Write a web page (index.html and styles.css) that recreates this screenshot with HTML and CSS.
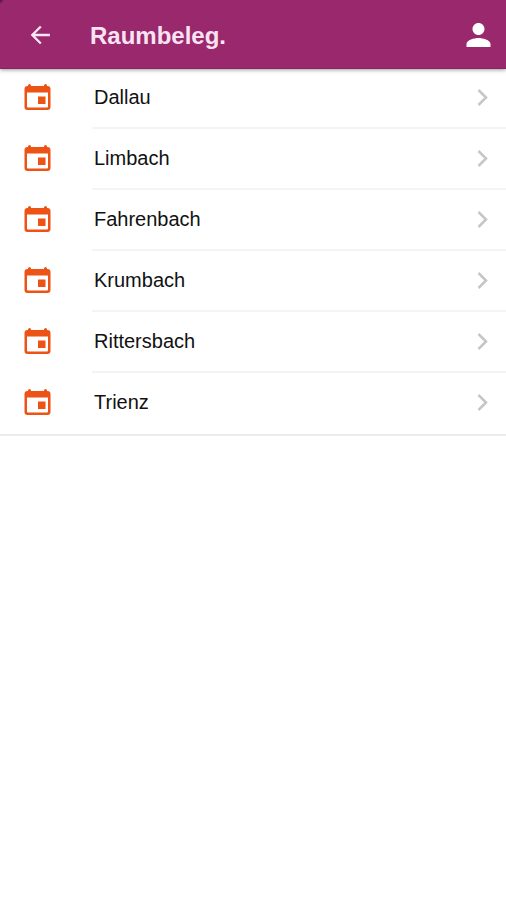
FILE: index.html
```html
<!DOCTYPE html>
<html lang="de">
<head>
<meta charset="utf-8">
<meta name="viewport" content="width=device-width, initial-scale=1">
<title>Raumbeleg.</title>
<link rel="stylesheet" href="styles.css">
</head>
<body>
<svg class="sprite" aria-hidden="true">
  <symbol id="event" viewBox="0 0 27 29"><path fill-rule="evenodd" d="M3.500 2H4v-.5Q4 0 5.500 0T7 1.500V2h13v-.5Q20 0 21.500 0T23 1.500V2h.5Q26.500 2 26.500 5v18q0 3-3 3h-20q-3 0-3-3V5q0-3 3-3zM3 8.500V22.500q0 1 1 1h19q1 0 1-1V8.500zM14 12.500h7.500v7.500H14z"/></symbol>
  <symbol id="chevron" viewBox="0 0 11 17"><path d="M1.500 1l7.500 7.500-7.500 7.500"/></symbol>
</svg>
<header class="bar">
  <button class="icon-button" type="button" aria-label="Zurück"><svg class="back" viewBox="0 0 24 24"><path d="M20.500 10.900H7.830l5.590-5.490L12 4l-8 8 8 8 1.410-1.410L7.830 13.100H20.500v-2.200z"/></svg></button>
  <h1 class="title">Raumbeleg.</h1>
  <button class="icon-button" type="button" aria-label="Profil"><svg class="person" viewBox="4 4 16 16"><path d="M12 12c2.210 0 4-1.790 4-4s-1.790-4-4-4-4 1.790-4 4 1.790 4 4 4zm0 2c-2.670 0-8 1.340-8 4v2h16v-2c0-2.660-5.330-4-8-4z"/></svg></button>
</header>
<main>
  <ul class="list">
    <li><a class="row" href="#dallau"><svg class="event"><use href="#event"/></svg><span class="label">Dallau<svg class="chevron"><use href="#chevron"/></svg></span></a></li>
    <li><a class="row" href="#limbach"><svg class="event"><use href="#event"/></svg><span class="label">Limbach<svg class="chevron"><use href="#chevron"/></svg></span></a></li>
    <li><a class="row" href="#fahrenbach"><svg class="event"><use href="#event"/></svg><span class="label">Fahrenbach<svg class="chevron"><use href="#chevron"/></svg></span></a></li>
    <li><a class="row" href="#krumbach"><svg class="event"><use href="#event"/></svg><span class="label">Krumbach<svg class="chevron"><use href="#chevron"/></svg></span></a></li>
    <li><a class="row" href="#rittersbach"><svg class="event"><use href="#event"/></svg><span class="label">Rittersbach<svg class="chevron"><use href="#chevron"/></svg></span></a></li>
    <li><a class="row" href="#trienz"><svg class="event"><use href="#event"/></svg><span class="label">Trienz<svg class="chevron"><use href="#chevron"/></svg></span></a></li>
  </ul>
</main>
</body>
</html>
```
FILE: styles.css
```css
* { box-sizing: border-box; }
body {
  margin: 0;
  background: #fff;
  color: #111;
  font-family: "Liberation Sans", Arial, sans-serif;
}
.sprite { display: none; }
.bar {
  position: relative;
  display: flex;
  align-items: center;
  height: 68px;
  padding: 2px 15px 0 26px;
  background: radial-gradient(circle at 0 0, #5c1648 1px, #99286c 4px);
  box-shadow: 0 1px 0 #8c2260, 0 2px 4px rgba(0, 0, 0, .4);
}
.icon-button {
  display: flex;
  padding: 0;
  border: 0;
  background: none;
  fill: #fff;
}
.back { width: 28px; height: 28px; fill: #f9e8f3; }
.person { width: 25px; height: 24px; }
.title {
  flex: 1;
  margin: 0 0 0 36px;
  padding-top: 2px;
  color: #f9e3f2;
  font-size: 24px;
  line-height: 30px;
  font-weight: 700;
}
.list {
  margin: 0;
  padding: 0;
  list-style: none;
  border-bottom: 2px solid #ebebec;
}
.row {
  display: flex;
  align-items: center;
  height: 61px;
  padding-left: 24px;
  color: inherit;
  text-decoration: none;
}
.event {
  width: 27px;
  height: 29px;
  margin-right: 41px;
  fill: #ec5314;
}
.label {
  flex: 1;
  display: flex;
  align-items: center;
  justify-content: space-between;
  height: 100%;
  padding: 0 18px 0 2px;
  border-bottom: 2px solid #f4f4f4;
  font-size: 20px;
}
.list li:last-child .label { border-bottom-color: transparent; }
.chevron {
  width: 11px;
  height: 17px;
  fill: none;
  stroke: #c6c6c6;
  stroke-width: 2.5;
}
```
